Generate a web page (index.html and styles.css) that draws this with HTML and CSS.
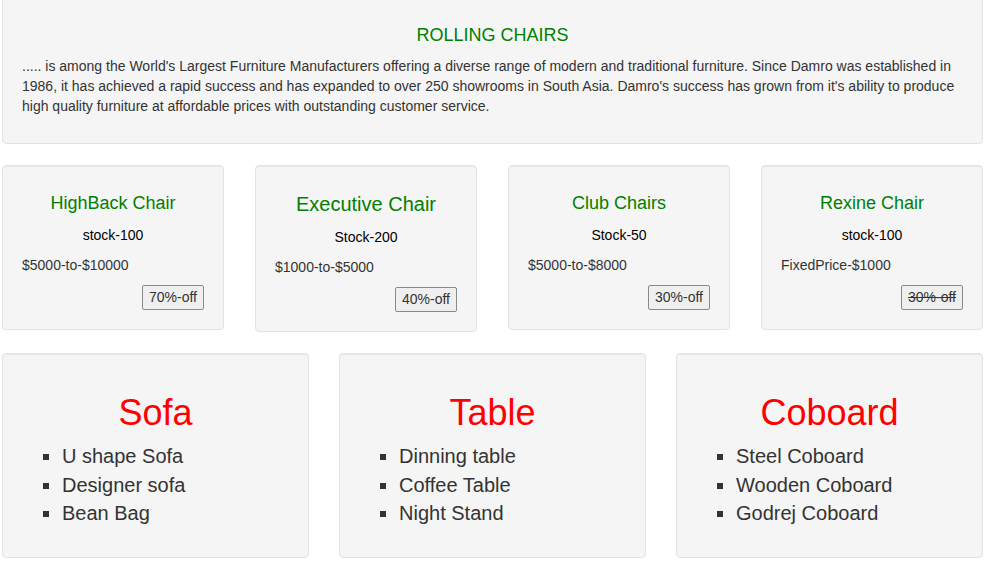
FILE: index.html
```html
<!DOCTYPE html>
<html>
<head>
<meta charset="utf-8">
<title>Furniture</title>
<link rel="stylesheet" href="styles.css">
</head>
<body>
<div class="page">
  <section class="well intro">
    <h4 class="intro-title">ROLLING CHAIRS</h4>
    <p class="intro-text">..... is among the World's Largest Furniture Manufacturers offering a diverse range of modern and traditional furniture. Since Damro was established in 1986, it has achieved a rapid success and has expanded to over 250 showrooms in South Asia. Damro's success has grown from it's ability to produce high quality furniture at affordable prices with outstanding customer service.</p>
  </section>

  <div class="chairs">
    <div class="well chair">
      <h4 class="chair-title">HighBack Chair</h4>
      <p class="stock">stock-100</p>
      <p class="price">$5000-to-$10000</p>
      <div class="offer-row"><button class="offer">70%-off</button></div>
    </div>
    <div class="well chair">
      <h4 class="chair-title big">Executive Chair</h4>
      <p class="stock">Stock-200</p>
      <p class="price">$1000-to-$5000</p>
      <div class="offer-row"><button class="offer">40%-off</button></div>
    </div>
    <div class="well chair">
      <h4 class="chair-title">Club Chairs</h4>
      <p class="stock">Stock-50</p>
      <p class="price">$5000-to-$8000</p>
      <div class="offer-row"><button class="offer">30%-off</button></div>
    </div>
    <div class="well chair">
      <h4 class="chair-title">Rexine Chair</h4>
      <p class="stock">stock-100</p>
      <p class="price">FixedPrice-$1000</p>
      <div class="offer-row"><button class="offer"><s>30%-off</s></button></div>
    </div>
  </div>

  <div class="categories">
    <div class="well category">
      <h1 class="cat-title">Sofa</h1>
      <ul class="cat-list">
        <li>U shape Sofa</li>
        <li>Designer sofa</li>
        <li>Bean Bag</li>
      </ul>
    </div>
    <div class="well category">
      <h1 class="cat-title">Table</h1>
      <ul class="cat-list">
        <li>Dinning table</li>
        <li>Coffee Table</li>
        <li>Night Stand</li>
      </ul>
    </div>
    <div class="well category">
      <h1 class="cat-title">Coboard</h1>
      <ul class="cat-list">
        <li>Steel Coboard</li>
        <li>Wooden Coboard</li>
        <li>Godrej Coboard</li>
      </ul>
    </div>
  </div>
</div>
</body>
</html>
```

FILE: styles.css
```css
* { box-sizing: border-box; }

html, body {
  margin: 0;
  padding: 0;
  background: #ffffff;
}

body {
  font-family: "Liberation Sans", Arial, Helvetica, sans-serif;
  font-size: 14px;
  line-height: 20px;
  color: #333333;
}

.page {
  padding: 0 9px 0 2px;
}

.well {
  background: #f5f5f5;
  border: 1px solid #e3e3e3;
  border-radius: 4px;
  box-shadow: inset 0 1px 1px rgba(0, 0, 0, 0.05);
}

/* intro */
.intro {
  margin-top: -5px;
  margin-bottom: 21px;
  padding: 19px;
}

.intro-title {
  margin: 10px 0 11px;
  font-size: 18px;
  font-weight: normal;
  line-height: 20px;
  color: #008000;
  text-align: center;
}

.intro-text {
  margin: 0 0 8px;
}

/* chairs */
.chairs {
  display: grid;
  grid-template-columns: repeat(4, 1fr);
  column-gap: 31px;
  align-items: start;
  margin-bottom: 21px;
}

.chair {
  padding: 18px 19px 19px 19px;
}

.chair-title {
  margin: 9px 0 12px;
  font-size: 18px;
  line-height: 20px;
  font-weight: normal;
  color: #008000;
  text-align: center;
}

.chair-title.big {
  font-size: 20px;
  line-height: 22px;
}

.stock {
  margin: 0;
  color: #000000;
  text-align: center;
}

.price {
  margin: 10px 0 0;
  color: #333333;
}

.offer-row {
  display: flex;
  justify-content: flex-end;
  margin-top: 10px;
}

.offer {
  font-family: "Liberation Sans", Arial, sans-serif;
  font-size: 14px;
  line-height: 17px;
  height: 25px;
  padding: 3px 6px;
  color: #333333;
  background: #efefef;
  border: 1px solid #8a8a8a;
  border-radius: 2px;
}

.offer s {
  text-decoration: line-through;
}

/* categories */
.categories {
  display: grid;
  grid-template-columns: repeat(3, 1fr);
  column-gap: 30px;
  align-items: start;
}

.category {
  padding: 19px;
}

.cat-title {
  margin: 20px 0 10px;
  font-size: 36px;
  line-height: 39px;
  font-weight: normal;
  color: #ff0000;
  text-align: center;
}

.cat-list {
  margin: 0 0 10px;
  padding-left: 40px;
  list-style: square;
  font-size: 20px;
  line-height: 28.5px;
  color: #333333;
}
```
